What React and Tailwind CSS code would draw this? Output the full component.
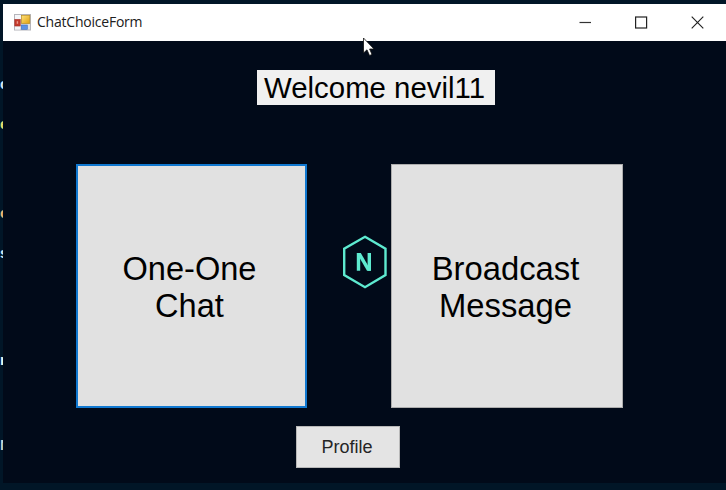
const edgeText = [
  { ch: 'c', color: 'text-[#d5e6f5]', place: 'mt-[74px]' },
  { ch: 'e', color: 'text-[#e5df70]', place: 'mt-[20px]' },
  { ch: 'c', color: 'text-[#ecb878]', place: 'mt-[69px]' },
  { ch: 's', color: 'text-[#d6e8f6]', place: 'mt-[20px]' },
  { ch: 'r', color: 'text-[#e8f4fa]', place: 'mt-[87px]' },
  { ch: 'N', color: 'text-[#c5d2da]', place: 'mt-[65px]' },
];

function EditorEdge() {
  return (
    <div className="flex h-[490px] w-[3px] shrink-0 flex-col overflow-hidden bg-[#011627] font-['Liberation_Sans',Arial,sans-serif] text-[15px] font-bold leading-5">
      {edgeText.map((item, i) => (
        <div key={i} className={`h-5 shrink-0 whitespace-nowrap ${item.place} ${item.color}`}>
          {item.ch}
        </div>
      ))}
    </div>
  );
}

function FormIcon() {
  return (
    <svg className="h-[18px] w-[18px]" viewBox="0 0 18 18">
      <defs>
        <linearGradient id="gold" x1="0" y1="0" x2="1" y2="1">
          <stop offset="0" stopColor="#ffe27a" />
          <stop offset="1" stopColor="#e0a010" />
        </linearGradient>
      </defs>
      <rect x="0.5" y="0.5" width="16" height="15.5" fill="#dfe0e4" stroke="#b5b5bb" />
      <rect x="1" y="1" width="6" height="4" fill="#f5f5f8" />
      <rect x="1" y="12.5" width="5" height="3" fill="#f5f5f8" />
      <rect x="0.8" y="5.5" width="5.4" height="6.5" fill="#c33a2d" stroke="#a82d24" strokeWidth="0.6" />
      <rect x="2.7" y="7.2" width="1.4" height="2.6" fill="#eb9a8c" />
      <rect x="7.5" y="1.3" width="8.3" height="8.2" fill="url(#gold)" stroke="#b98d20" strokeWidth="0.7" />
      <rect x="7.3" y="11" width="6" height="4.3" fill="#5c92e6" stroke="#3b6fc4" strokeWidth="0.6" />
    </svg>
  );
}

function TitleBar() {
  return (
    <header className="flex h-[37px] items-center bg-white pl-[11px] pr-[22px]">
      <FormIcon />
      <span className="ml-[5px] w-[106px] whitespace-nowrap pb-[2px] font-['Open_Sans','Noto_Sans',sans-serif] text-[14px] leading-[18px] tracking-[-0.22px] text-[#202020]">
        ChatChoiceForm
      </span>
      <div className="ml-auto flex items-center">
        <svg className="mr-[43px] h-[13px] w-[13px]" viewBox="0 0 13 13">
          <path d="M0.5 6.5H12" stroke="#333" strokeWidth="1.2" />
        </svg>
        <svg className="mr-[43px] h-[13px] w-[13px]" viewBox="0 0 13 13">
          <rect x="0.6" y="1" width="11" height="11" fill="none" stroke="#222" strokeWidth="1.2" />
        </svg>
        <svg className="h-[13px] w-[13px]" viewBox="0 0 13 13">
          <path d="M0.7 0.7L12.3 12.3M12.3 0.7L0.7 12.3" stroke="#222" strokeWidth="1.15" />
        </svg>
      </div>
    </header>
  );
}

function HexLogo() {
  return (
    <svg className="mt-[71px] h-[54px] w-[46px]" viewBox="0 0 46 54">
      <path
        d="M23 1.8L43.5 13.6V40L23 52.2L2.2 40V13.6Z"
        fill="none"
        stroke="#5eead0"
        strokeWidth="2.4"
      />
      <path d="M16.5 35.8V18M27.3 18V35.8" fill="none" stroke="#5eead0" strokeWidth="3.4" />
      <path d="M14.8 18H18.8L29 35.8H25Z" fill="#5eead0" />
    </svg>
  );
}

export default function App() {
  return (
    <div className="relative flex h-[490px] w-[726px] overflow-hidden bg-[#011627]">
      <EditorEdge />
      <main className="mt-1 flex h-[479px] w-[723px] flex-col bg-[#010a19] font-['Liberation_Sans',Arial,sans-serif] text-black">
        <TitleBar />
        <div className="ml-[254px] mt-[29px] flex h-[35px] w-[238px] items-center bg-[#f0f0f0] pl-[7px]">
          <span className="whitespace-nowrap text-[29.4px] leading-[35px]">Welcome nevil11</span>
        </div>
        <div className="ml-[73px] mt-[59px] flex h-[244px] items-start">
          <button className="flex h-[244px] w-[231px] flex-col items-center justify-center border-2 border-[#1078d0] bg-[#e1e1e1] pr-[4px] pt-[2px] text-[32.6px] leading-[37px]">
            <span>One-One</span>
            <span>Chat</span>
          </button>
          <div className="flex w-[84px] justify-end pr-[3px]">
            <HexLogo />
          </div>
          <button className="flex h-[244px] w-[232px] flex-col items-center justify-center border border-[#adadad] bg-[#e1e1e1] pr-[3px] pt-[2px] text-[32.8px] leading-[37px]">
            <span>Broadcast</span>
            <span>Message</span>
          </button>
        </div>
        <button className="ml-[293px] mt-[18px] flex h-[42px] w-[104px] items-center justify-center border border-[#b8b8b8] bg-[#e4e4e4] pr-[2px] text-[18px] leading-5 text-[#252525]">
          Profile
        </button>
      </main>
      <svg className="absolute left-[363px] top-[37px] h-[20px] w-[12px]" viewBox="0 0 12 20">
        <path
          d="M0.5 1V16L4 12.8L6.5 18.5L9 17.4L6.6 12H11Z"
          fill="#fff"
          stroke="#111"
          strokeWidth="0.8"
        />
      </svg>
    </div>
  );
}
